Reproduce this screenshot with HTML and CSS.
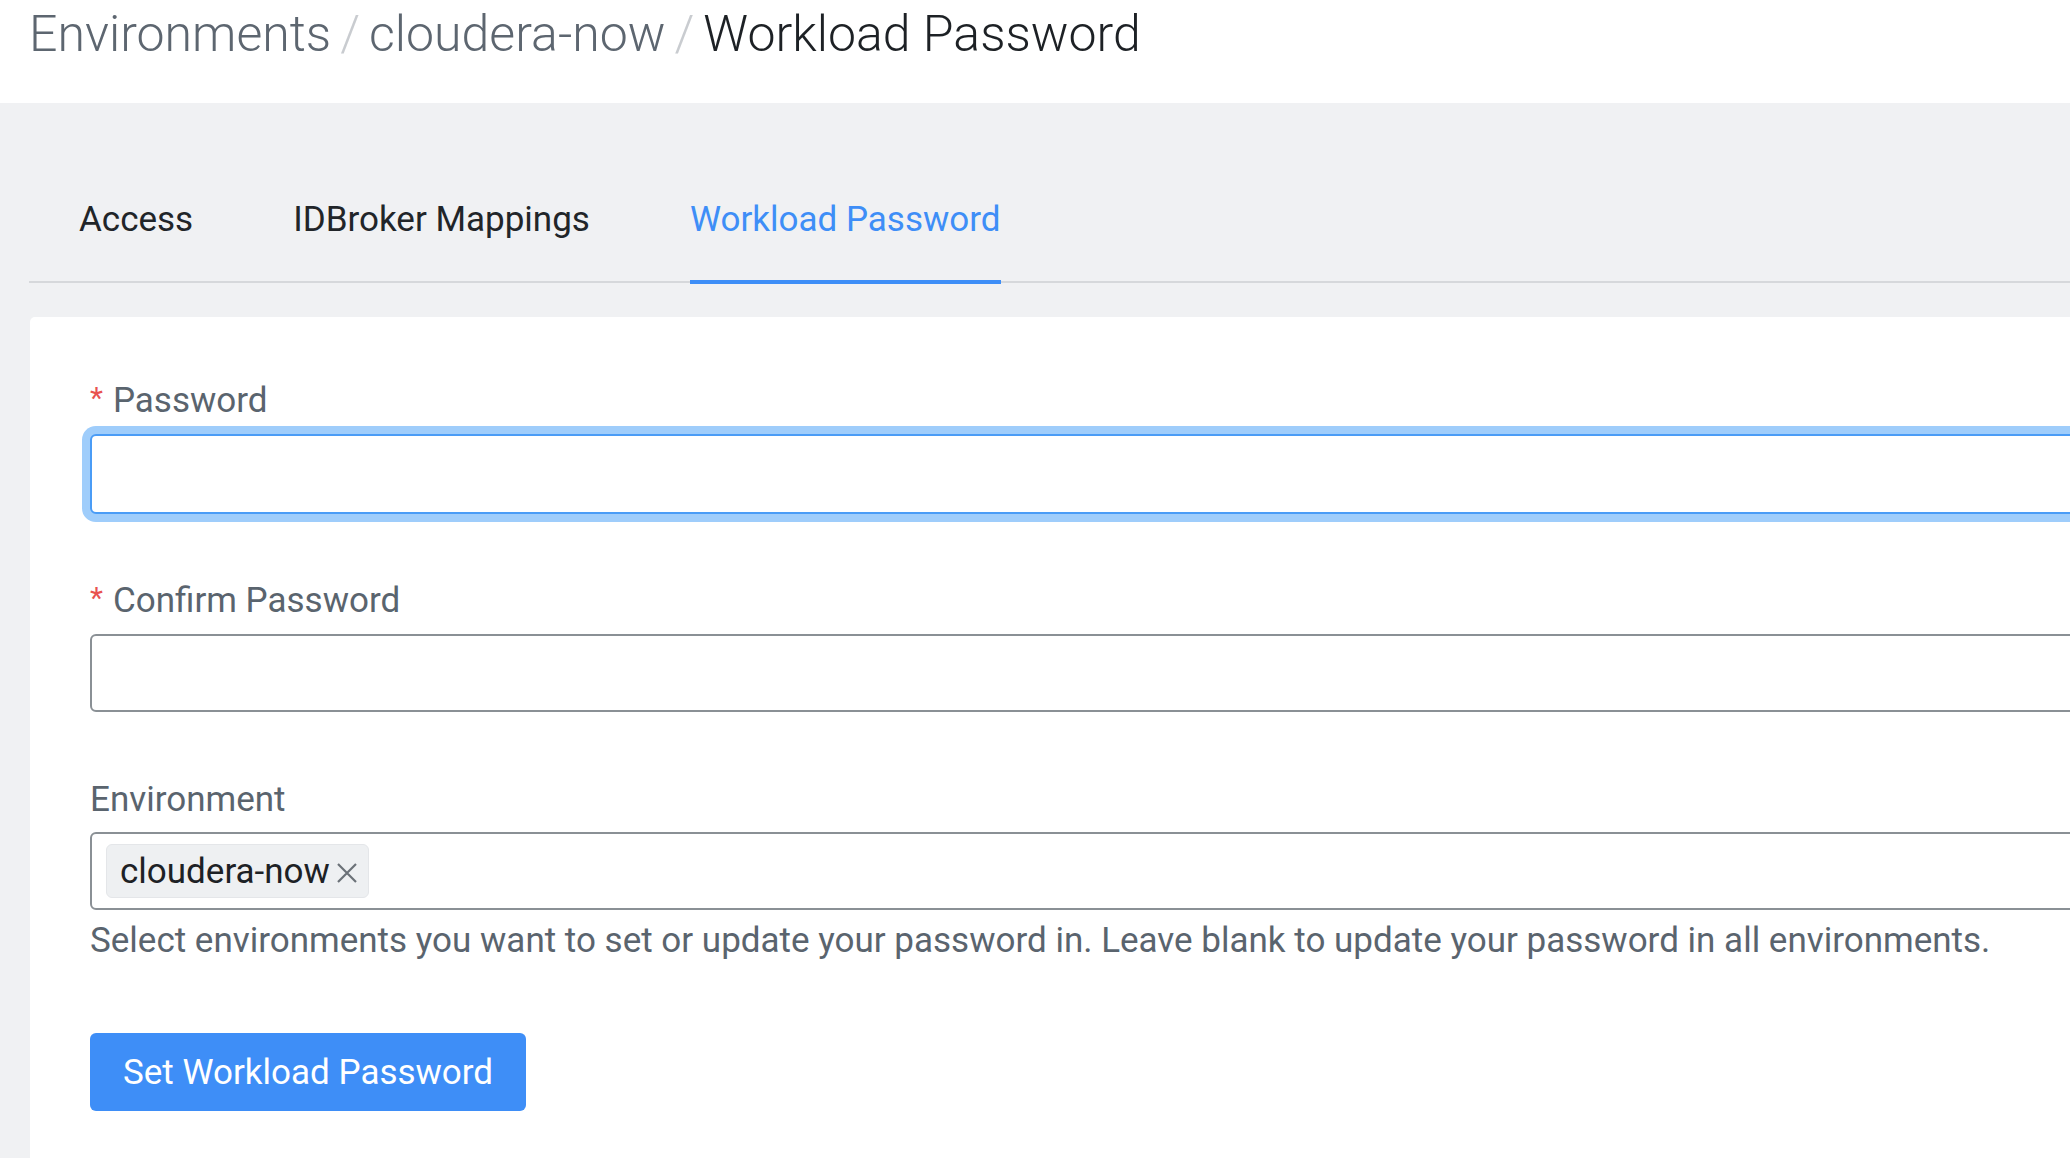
FILE: index.html
```html
<!DOCTYPE html>
<html lang="en">
<head>
<meta charset="utf-8">
<title>Workload Password</title>
<link rel="stylesheet" href="styles.css">
</head>
<body>
<header class="page-header">
  <nav class="breadcrumb">
    <a class="crumb">Environments</a><span class="sep">/</span><a class="crumb">cloudera-now</a><span class="sep">/</span><span class="crumb current">Workload Password</span>
  </nav>
</header>
<main class="main">
  <div class="tabs">
    <div class="tab">Access</div>
    <div class="tab">IDBroker Mappings</div>
    <div class="tab active">Workload Password</div>
  </div>
  <section class="card">
    <div class="form-item first">
      <label class="label"><span class="req">*</span>Password</label>
      <div class="input focused"></div>
    </div>
    <div class="form-item second">
      <label class="label"><span class="req">*</span>Confirm Password</label>
      <div class="input"></div>
    </div>
    <div class="form-item env">
      <label class="label">Environment</label>
      <div class="input select">
        <span class="chip">cloudera-now<svg class="chip-x" width="22" height="22" viewBox="0 0 22 22" aria-hidden="true"><path d="M2 2 L20 20 M20 2 L2 20" stroke="#6b7178" stroke-width="2.2" fill="none"/></svg></span>
      </div>
      <div class="help">Select environments you want to set or update your password in. Leave blank to update your password in all environments.</div>
    </div>
    <button class="btn">Set Workload Password</button>
  </section>
</main>
</body>
</html>
```

FILE: styles.css
```css
html, body {
  margin: 0;
  padding: 0;
  overflow: hidden;
  height: 100%;
}
body {
  font-family: Roboto, "Liberation Sans", sans-serif;
  background: #f0f1f3;
  color: #212529;
}
.page-header {
  background: #ffffff;
  height: 103px;
  box-sizing: border-box;
  padding: 5px 0 0 29px;
}
.breadcrumb {
  font-size: 50px;
  font-weight: 300;
  line-height: 58px;
  white-space: nowrap;
}
.crumb {
  color: #5d6670;
}
.crumb.current {
  color: #1d2125;
}
.sep {
  color: #c9ccd0;
  margin: 0 9px;
}
.main {
  padding-left: 29px;
}
.tabs {
  display: flex;
  gap: 100px;
  padding: 97px 0 0 50px;
  border-bottom: 2px solid #d6d8db;
}
.tab {
  font-size: 35px;
  line-height: 40px;
  padding-bottom: 40px;
  border-bottom: 4px solid transparent;
  margin-bottom: -3px;
  color: #212529;
  white-space: nowrap;
}
.tab.active {
  color: #3e8ef7;
  border-bottom-color: #3e8ef7;
}
.card {
  margin: 34px 0 0 1px;
  width: 2400px;
  background: #ffffff;
  border-radius: 5px;
  padding: 63px 60px 60px;
  box-sizing: border-box;
}
.form-item.first {
  margin-bottom: 66px;
}
.form-item.second {
  margin-bottom: 67px;
}
.form-item.env {
  margin-bottom: 72px;
}
.label {
  display: block;
  font-size: 35px;
  line-height: 41px;
  color: #5a646e;
  margin-bottom: 12px;
}
.req {
  color: #e8524f;
  font-size: 30px;
  margin-right: 10px;
  position: relative;
  top: -4px;
}
.input {
  height: 78px;
  box-sizing: border-box;
  border: 2px solid #8a9095;
  border-radius: 6px;
  background: #fff;
}
.input.focused {
  height: 80px;
  border-color: #4a9cf6;
  box-shadow: 0 0 0 8px #9fcdfb;
}
.input.select {
  display: flex;
  align-items: center;
  padding-left: 14px;
}
.chip {
  display: inline-flex;
  align-items: center;
  height: 54px;
  box-sizing: border-box;
  padding: 0 10px 0 13px;
  background: #eef0f2;
  border: 1px solid #e4e6e9;
  border-radius: 6px;
  font-size: 35px;
  color: #1d2125;
}
.chip-x {
  margin-left: 6px;
  margin-top: 4px;
  display: block;
}
.help {
  font-size: 35px;
  line-height: 40px;
  color: #5a646e;
  margin-top: 11px;
  white-space: nowrap;
}
.btn {
  display: block;
  height: 78px;
  padding: 0 33px;
  border: none;
  border-radius: 6px;
  background: #3e8ef7;
  color: #ffffff;
  font-family: Roboto, "Liberation Sans", sans-serif;
  font-size: 35px;
}
```
